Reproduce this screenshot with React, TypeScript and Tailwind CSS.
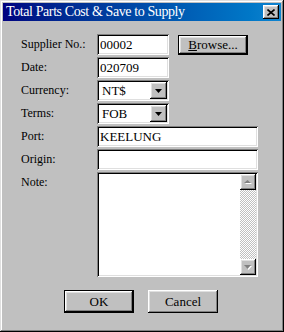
import React from "react";

const sunken =
  "bg-white shadow-[inset_1px_1px_0_#808080,inset_-1px_-1px_0_#fff,inset_2px_2px_0_#000,inset_-2px_-2px_0_#dfdfdf]";
const raised =
  "bg-[#c0c0c0] shadow-[inset_-1px_-1px_0_#000,inset_1px_1px_0_#fff,inset_-2px_-2px_0_#808080,inset_2px_2px_0_#dfdfdf]";

const Label = ({ children }: { children: React.ReactNode }) => (
  <div className="w-[76px] shrink-0 pt-[2px] text-[12px] leading-[16px] text-black">{children}</div>
);

const DownArrow = () => (
  <svg width="7" height="4" viewBox="0 0 7 4">
    <path d="M0 0h7L3.5 4z" fill="#000" />
  </svg>
);

const Select = ({ value }: { value: string }) => (
  <div className={`${sunken} flex h-[21px] w-[72px] items-center pl-[5px] pr-[2px]`}>
    <span className="flex-1 text-[13px] leading-none">{value}</span>
    <div className={`${raised} flex h-[17px] w-[17px] items-center justify-center`}>
      <DownArrow />
    </div>
  </div>
);

const Button = ({ children, isDefault, className = "" }: { children: React.ReactNode; isDefault?: boolean; className?: string }) => (
  <div className={`${isDefault ? "border border-black" : ""} ${className}`}>
    <div className={`${raised} flex h-full w-full items-center justify-center text-[13px]`}>{children}</div>
  </div>
);

export default function App() {
  return (
    <div className="flex h-[332px] w-[284px] flex-col bg-[#c0c0c0] p-[3px] font-['Liberation_Serif','Noto_Sans_CJK_TC',serif] text-black shadow-[inset_-1px_-1px_0_#000,inset_1px_1px_0_#dfdfdf,inset_-2px_-2px_0_#808080,inset_2px_2px_0_#fff]">
      <div className="flex h-[18px] items-center bg-gradient-to-r from-[#000080] to-[#1084d0] pl-[3px] pr-[2px]">
        <span className="flex-1 text-[14px] leading-none tracking-[-0.4px] text-white">Total Parts Cost &amp; Save to Supply</span>
        <div className={`${raised} flex h-[14px] w-[16px] items-center justify-center`}>
          <svg width="8" height="7" viewBox="0 0 8 7">
            <path d="M0.5 0.5l7 6M7.5 0.5l-7 6" stroke="#000" strokeWidth="1.6" />
          </svg>
        </div>
      </div>

      <div className="flex flex-col gap-[2px] pl-[18px] pt-[13px]">
        <div className="flex h-[21px]">
          <Label>Supplier No.:</Label>
          <div className={`${sunken} flex h-[21px] w-[72px] items-center px-[3px] text-[13px]`}>00002</div>
          <Button isDefault className="ml-[9px] mt-[1px] h-[20px] w-[70px]">
            <span>
              <span className="underline">B</span>rowse...
            </span>
          </Button>
        </div>
        <div className="flex h-[21px]">
          <Label>Date:</Label>
          <div className={`${sunken} flex h-[21px] w-[72px] items-center px-[3px] text-[13px]`}>020709</div>
        </div>
        <div className="flex h-[21px]">
          <Label>Currency:</Label>
          <Select value="NT$" />
        </div>
        <div className="flex h-[21px]">
          <Label>Terms:</Label>
          <Select value="FOB" />
        </div>
        <div className="flex h-[21px]">
          <Label>Port:</Label>
          <div className={`${sunken} flex h-[21px] w-[161px] items-center px-[3px] text-[13px]`}>KEELUNG</div>
        </div>
        <div className="flex h-[21px]">
          <Label>Origin:</Label>
          <div className={`${sunken} h-[21px] w-[161px]`} />
        </div>
        <div className="flex h-[105px]">
          <Label>Note:</Label>
          <div className={`${sunken} flex h-[105px] w-[161px] p-[2px]`}>
            <div className="flex-1" />
            <div className="flex w-[16px] flex-col bg-[repeating-conic-gradient(#c0c0c0_0_25%,#fff_0_50%)] bg-[length:2px_2px]">
              <div className={`${raised} flex h-[16px] items-center justify-center`}>
                <svg width="8" height="5" viewBox="0 0 8 5">
                  <path d="M1 4h7L4.5 1z" fill="#fff" />
                  <path d="M0 3h7L3.5 0z" fill="#808080" />
                </svg>
              </div>
              <div className="flex-1" />
              <div className={`${raised} flex h-[16px] items-center justify-center`}>
                <svg width="8" height="5" viewBox="0 0 8 5">
                  <path d="M1 1h7L4.5 5z" fill="#fff" />
                  <path d="M0 0h7L3.5 4z" fill="#808080" />
                </svg>
              </div>
            </div>
          </div>
        </div>
      </div>

      <div className="mt-[13px] flex pl-[61px]">
        <Button isDefault className="h-[23px] w-[70px]">OK</Button>
        <Button className="ml-[14px] h-[23px] w-[70px]">Cancel</Button>
      </div>
    </div>
  );
}
